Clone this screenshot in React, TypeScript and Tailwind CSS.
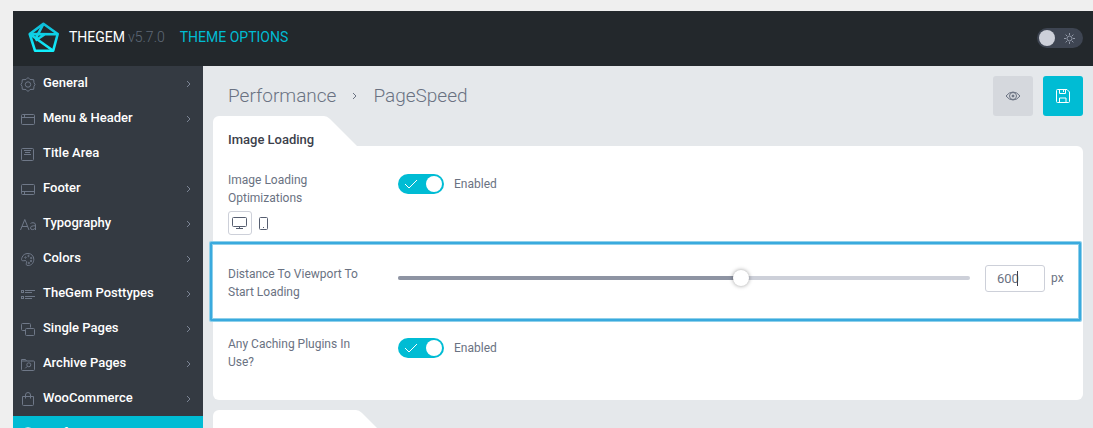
import React, { useState } from 'react';

interface MenuItem {
  label: string;
  icon: React.ReactNode;
  arrow?: boolean;
  active?: boolean;
}

const Icon: React.FC<{ children: React.ReactNode; className?: string }> = ({ children, className }) => (
  <svg
    viewBox="0 0 16 16"
    fill="none"
    stroke="currentColor"
    strokeWidth="1"
    aria-hidden="true"
    className={`size-4 shrink-0 ${className || ''}`}
  >
    {children}
  </svg>
);

const menuItems: MenuItem[] = [
  {
    label: 'General',
    arrow: true,
    icon: (
      <Icon>
        <path d="M8 1.500l2 2 3.700.2.300 3L15 8.500l-1 1.800-.3 3-3.700.2-2 2-2-2-3.700-.2-.3-3L1 8.500l1-1.800.3-3L6 3.500z" />
        <circle cx="8" cy="8.500" r="2.700" />
      </Icon>
    ),
  },
  {
    label: 'Menu & Header',
    arrow: true,
    icon: (
      <Icon>
        <rect x="1.500" y="3.500" width="13" height="10" rx="1" />
        <path d="M1.500 6.500h13M4.500 3.500v3" />
      </Icon>
    ),
  },
  {
    label: 'Title Area',
    icon: (
      <Icon>
        <rect x="1.500" y="2.500" width="12" height="12" rx="1" />
        <path d="M4 4.500h7M5 6.500h5M4 8.500h7" />
      </Icon>
    ),
  },
  {
    label: 'Footer',
    arrow: true,
    icon: (
      <Icon>
        <rect x="1.500" y="3.500" width="13" height="10" rx="1" />
        <path d="M1.500 10.500h13M4.500 10.500v3" />
      </Icon>
    ),
  },
  {
    label: 'Typography',
    arrow: true,
    icon: (
      <Icon className="overflow-visible">
        <path d="M.5 14L4.800 3.500 9 14M2 10.500h5.600M10.500 7.500q1-.8 2.500-.8 2.500 0 2.500 2.300v5M15.500 9.800h-2.200q-2.800.2-2.800 2.100 0 1.700 2 1.700 2.400 0 3-2" />
      </Icon>
    ),
  },
  {
    label: 'Colors',
    arrow: true,
    icon: (
      <Icon>
        <path d="M2 6.500C2.800 3.800 5.200 2.500 8 2.500c3.500 0 5.800 2.500 5.800 5.800 0 3.500-2.300 6.200-5.600 6.200-2.200 0-2.300-1.300-1.800-2.400.6-1.400.2-2.600-1.300-2.500-1.600.1-3.600.7-3.600-1.200 0-.7.3-1.300.5-1.900z" />
        <circle cx="5.500" cy="6.500" r=".7" />
        <circle cx="8.500" cy="5" r=".7" />
        <circle cx="11.200" cy="7" r=".7" />
        <circle cx="11" cy="10" r=".7" />
        <circle cx="8.800" cy="12" r=".7" />
      </Icon>
    ),
  },
  {
    label: 'TheGem Posttypes',
    arrow: true,
    icon: (
      <Icon>
        <rect x="1.500" y="4.500" width="2" height="2" />
        <rect x="1.500" y="10.500" width="2" height="2" />
        <path d="M5 4.500h10M5 6.500h7M5 10.500h10M5 12.500h7" />
      </Icon>
    ),
  },
  {
    label: 'Single Pages',
    arrow: true,
    icon: (
      <Icon>
        <path d="M5.500 9.500h-3q-1 0-1-1v-5q0-1 1-1h7q1 0 1 1v3" />
        <rect x="5.500" y="7.500" width="9" height="7" rx="1" />
      </Icon>
    ),
  },
  {
    label: 'Archive Pages',
    arrow: true,
    icon: (
      <Icon>
        <path d="M1.500 13.500v-10h4l1 1.500h7q1 0 1 1v7.500q0 1-1 1h-11q-1 0-1-1zM1.500 5h5" />
        <circle cx="8.800" cy="8.800" r="2" />
        <path d="M7.300 10.300l-2 2" />
      </Icon>
    ),
  },
  {
    label: 'WooCommerce',
    arrow: true,
    icon: (
      <Icon>
        <path d="M2.500 5.500h11v8q0 1-1 1h-9q-1 0-1-1zM5.500 7.500V4q0-2.500 2.500-2.500T10.500 4v3.500" />
      </Icon>
    ),
  },
  {
    label: 'Performance',
    arrow: true,
    active: true,
    icon: (
      <Icon>
        <path d="M3.500 13a6.500 6.500 0 1 1 9 0M8 8.500l3-3" />
      </Icon>
    ),
  },
];

const Logo = () => (
  <svg viewBox="0 0 32 32" fill="none" aria-hidden="true" className="size-8">
    <defs>
      <linearGradient id="gem" x1="0" y1="0" x2="0" y2="31" gradientUnits="userSpaceOnUse">
        <stop stopColor="#0db9d6" />
        <stop offset="1" stopColor="#12f3ff" />
      </linearGradient>
    </defs>
    <g stroke="url(#gem)" strokeWidth="2.600" strokeLinejoin="round">
      <path d="M15.400 1.800L29.700 12 25.200 28.700H7L1.700 12z" />
      <path d="M1.700 12L29.700 12.200M15.400 1.800L7.500 17M1.700 12l23.500 16.700M7.500 18.500l9-6" />
    </g>
  </svg>
);

const Chevron: React.FC<{ className?: string }> = ({ className }) => (
  <svg viewBox="0 0 5 8" fill="none" stroke="currentColor" aria-hidden="true" className={`h-2 w-[5px] ${className || ''}`}>
    <path d="M1 1l3 3-3 3" />
  </svg>
);

const CardTab: React.FC<{ title?: string }> = ({ title }) => (
  <div className="relative h-[30px] w-fit min-w-36">
    <span className="absolute inset-y-0 left-0 w-16 rounded-tl-md bg-white" />
    <span className="absolute inset-y-0 right-0 left-10 origin-bottom skew-x-45 rounded-tr-[3px] bg-white" />
    {title ? (
      <h2 className="relative pt-[15px] pr-[43px] pl-[15px] text-[13px] leading-[18px] font-medium text-[#3c3f4b]">{title}</h2>
    ) : (
      <div className="w-44" />
    )}
  </div>
);

const Toggle: React.FC<{ id: string }> = ({ id }) => {
  const [on, setOn] = useState(true);

  return (
    <label htmlFor={id} className="mt-[3px] flex h-5 cursor-pointer items-center gap-[10px]">
      <input id={id} type="checkbox" checked={on} onChange={() => setOn(!on)} className="sr-only" />
      <span
        className={`flex h-5 w-[46px] items-center justify-between rounded-full px-0.5 ${
          on ? 'bg-[#00bcd4]' : 'flex-row-reverse bg-[#cdd0d9]'
        }`}
      >
        <svg viewBox="0 0 14 10" fill="none" stroke="white" aria-hidden="true" className="ml-1 h-[10px] w-[14px]">
          <path d="M1 5l4 4 8-8" />
        </svg>
        <span className="size-4 rounded-full bg-white" />
      </span>
      <span>{on ? 'Enabled' : 'Disabled'}</span>
    </label>
  );
};

const App: React.FC = () => {
  const [distance, setDistance] = useState(600);
  const [light, setLight] = useState(true);

  return (
    <div className="h-screen overflow-hidden bg-[#efefef] pt-[11px] pl-[13px] font-[Roboto,sans-serif] text-xs leading-[18px] text-[#6a7282]">
      <header className="flex h-[55px] items-center bg-[#23282c] pr-[10px] pb-px pl-[15px] text-sm leading-5">
        <Logo />
        <span className="ml-[9px] pb-0.5 text-white">THEGEM</span>
        <span className="ml-[3px] pb-0.5 font-light text-[#5f6877]">v5.7.0</span>
        <span className="ml-[15px] pb-0.5 text-[#00bcd4]">THEME OPTIONS</span>
        <label className="ml-auto flex h-5 w-[46px] cursor-pointer items-center justify-between rounded-full bg-[#3e4552] pr-[7px] pl-0.5">
          <input
            type="checkbox"
            aria-label="Light mode"
            checked={light}
            onChange={() => setLight(!light)}
            className="sr-only"
          />
          <span className="size-4 rounded-full bg-[#cdd0d9]" />
          <svg viewBox="0 0 13 13" fill="none" stroke="#9299a8" aria-hidden="true" className="size-[13px]">
            <circle cx="6.500" cy="6.500" r="2.500" />
            <path d="M6.500 1v2M6.500 10v2M1 6.500h2M10 6.500h2M2.600 2.600L4 4M9 9l1.400 1.400M2.600 10.400L4 9M9 4l1.400-1.400" />
          </svg>
        </label>
      </header>

      <div className="flex">
        <nav className="w-[190px] shrink-0 bg-[#343a42]">
          {menuItems.map((item) => (
            <a
              key={item.label}
              href="#"
              className={`flex h-[35px] items-center pr-3 pl-[7px] text-[13px] font-medium text-white ${
                item.active ? 'bg-[#00bcd4]' : ''
              }`}
            >
              <span className={item.active ? 'text-white' : 'text-[#6f7888]'}>{item.icon}</span>
              <span className="ml-[7px] pb-0.5">{item.label}</span>
              {item.arrow && <Chevron className={item.active ? 'ml-auto text-white' : 'ml-auto text-[#7b8494]'} />}
            </a>
          ))}
        </nav>

        <main className="min-w-0 flex-1 bg-[#e5e8eb] px-[10px]">
          <div className="flex h-[50px] items-end gap-[10px] pl-[15px]">
            <h1 className="mr-auto flex h-10 items-center gap-4 text-[19px] font-light">
              <span>Performance</span>
              <Chevron />
              <span>PageSpeed</span>
            </h1>
            <button aria-label="Preview" className="flex size-10 items-center justify-center rounded-[3px] bg-[#d5d8dd]">
              <svg viewBox="0 0 16 12" fill="none" stroke="currentColor" aria-hidden="true" className="h-3 w-4">
                <path d="M1 6q3-4 7-4t7 4q-3 4-7 4T1 6z" />
                <circle cx="8" cy="6" r="3.500" />
                <circle cx="8" cy="6" r="1" fill="currentColor" />
              </svg>
            </button>
            <button aria-label="Save" className="flex size-10 items-center justify-center rounded-[3px] bg-[#00bcd4] text-white">
              <svg viewBox="0 0 14 14" fill="none" stroke="currentColor" aria-hidden="true" className="size-[14px]">
                <path d="M1.500.5h9.500l2.500 2.500v9.500q0 1-1 1h-11q-1 0-1-1v-11q0-1 1-1zM3.500.5v4h6v-4M7.500 1v2M3.500 13.500v-4.500h6.500v4.500" />
              </svg>
            </button>
          </div>

          <section>
            <CardTab title="Image Loading" />
            <div className="flex flex-col gap-[30px] rounded-md rounded-tl-none bg-white px-[15px] py-[25px]">
              <div className="flex">
                <div className="w-[170px] shrink-0 pr-8">
                  <p>Image Loading Optimizations</p>
                  <div className="mt-1 flex text-[#565e70]">
                    <button aria-label="Desktop" className="flex size-6 items-center justify-center rounded-[3px] border border-[#cdd0d9]">
                      <svg viewBox="0 0 16 14" fill="none" stroke="currentColor" aria-hidden="true" className="h-[14px] w-4">
                        <rect x=".5" y="1.500" width="14" height="9" rx="1" />
                        <path d="M7.500 10.500v2M4 12.500h7" />
                      </svg>
                    </button>
                    <button aria-label="Mobile" className="flex size-6 items-center justify-center">
                      <svg viewBox="0 0 10 14" fill="none" stroke="currentColor" aria-hidden="true" className="h-[14px] w-[10px]">
                        <rect x=".5" y="1.500" width="8" height="12" rx="1" />
                        <path d="M4 11.500h1" />
                      </svg>
                    </button>
                  </div>
                </div>
                <Toggle id="image-loading" />
              </div>

              <div className="relative flex min-h-10">
                <span className="pointer-events-none absolute -top-[23px] -right-[13px] -bottom-4 -left-[18px] rounded-[1px] border-2 border-[#3aaade] shadow-[0_0_0_1px_#8fd0ea,inset_0_0_0_1px_#8fd0ea]" />
                <label htmlFor="distance" className="w-[170px] shrink-0 pr-8">
                  Distance To Viewport To Start Loading
                </label>
                <div className="flex flex-1 items-start">
                  <div className="relative mt-[5px] flex h-4 flex-1 items-center">
                    <div className="h-1 flex-1 rounded-full bg-[#cdd0d9]">
                      <div className="h-1 rounded-full bg-[#8e94a3]" style={{ width: `${distance / 10}%` }} />
                    </div>
                    <input
                      type="range"
                      aria-label="Distance"
                      min={0}
                      max={1000}
                      value={distance}
                      onChange={(e) => setDistance(Number(e.target.value))}
                      className="absolute inset-y-0 -left-2 h-4 w-[calc(100%+16px)] cursor-pointer appearance-none bg-transparent [&::-webkit-slider-thumb]:size-4 [&::-webkit-slider-thumb]:appearance-none [&::-webkit-slider-thumb]:rounded-full [&::-webkit-slider-thumb]:bg-white [&::-webkit-slider-thumb]:shadow-[0_0_4px_rgba(0,0,0,0.4)]"
                    />
                  </div>
                  <div className="relative ml-[15px]">
                    <input
                      id="distance"
                      type="text"
                      value={distance}
                      onChange={(e) => setDistance(Number(e.target.value) || 0)}
                      className="block h-[27px] w-[60px] rounded-[3px] border border-[#cdd0d9] bg-white pl-[11px] text-[13px] outline-none"
                    />
                    <span className="pointer-events-none absolute top-1.5 left-8 h-[15px] w-px bg-[#3c3f4b]" />
                  </div>
                  <span className="mt-1 ml-1.5 w-[17px]">px</span>
                </div>
              </div>

              <div className="flex min-h-10">
                <p className="w-[170px] shrink-0 pr-8">Any Caching Plugins In Use?</p>
                <Toggle id="caching-plugins" />
              </div>
            </div>
          </section>

          <section className="mt-[10px]">
            <CardTab />
            <div className="h-40 rounded-md rounded-tl-none bg-white" />
          </section>
        </main>
      </div>
    </div>
  );
};

export default App;
